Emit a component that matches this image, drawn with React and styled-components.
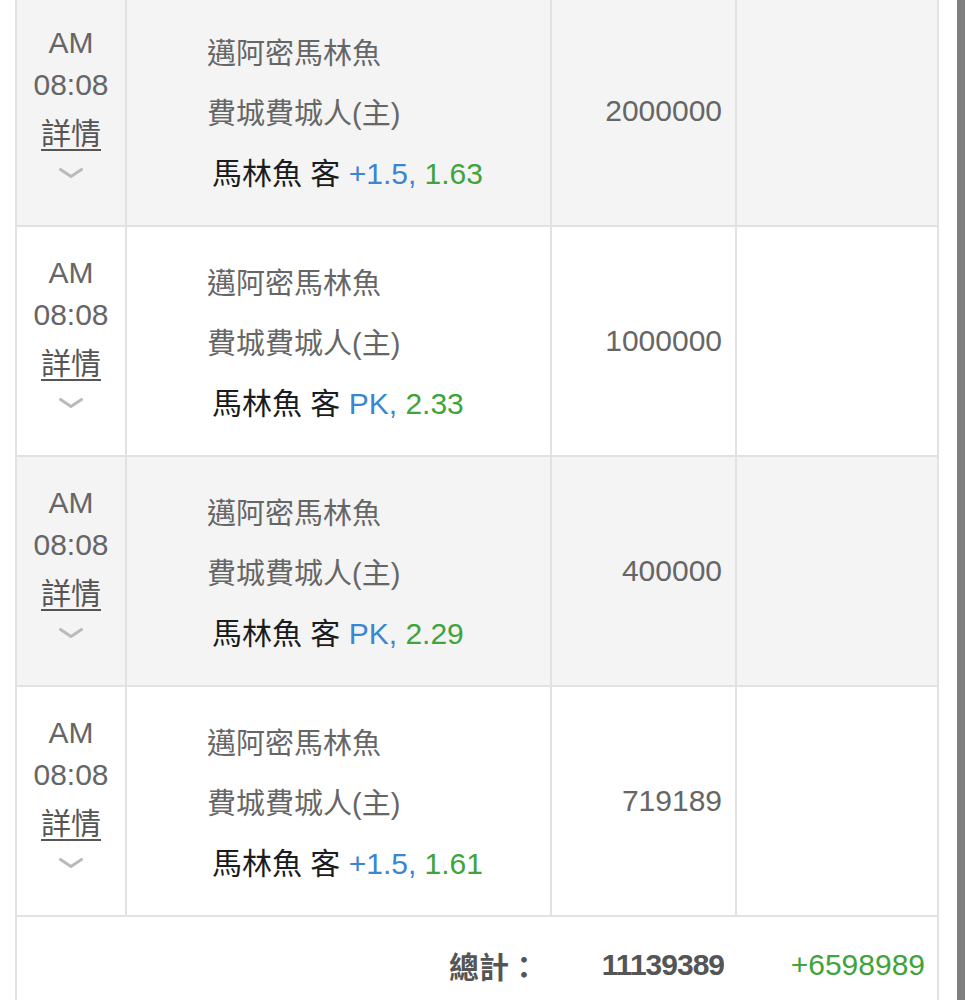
import React from "react";
import styled, { createGlobalStyle } from "styled-components";

const GlobalStyle = createGlobalStyle`
  html, body {
    margin: 0;
    padding: 0;
    background: #fff;
  }
  body {
    font-family: "Liberation Sans", "Noto Sans CJK TC", sans-serif;
    overflow: hidden;
  }
`;

const Page = styled.div`
  display: flex;
  align-items: flex-start;
  width: 974px;
  height: 1000px;
  overflow: hidden;
`;

const Table = styled.div`
  flex: none;
  width: 924px;
  box-sizing: border-box;
  margin: -3px 0 0 15px;
  border-left: 2px solid #e2e2e2;
  border-right: 2px solid #e2e2e2;
`;

const ScrollBar = styled.div`
  flex: none;
  width: 8px;
  height: 1000px;
  margin-left: 18px;
  background: #7f7f7f;
`;

const Row = styled.div`
  display: grid;
  grid-template-columns: 110px 425px 185px 200px;
  height: 230px;
  box-sizing: border-box;
  border-bottom: 2px solid #e2e2e2;
  background: ${(p) => (p.$shaded ? "#f4f4f4" : "#fff")};
`;

const Cell = styled.div`
  box-sizing: border-box;
  border-right: ${(p) => (p.$last ? "none" : "2px solid #e2e2e2")};
  font-size: 30px;
`;

const TimeCell = styled(Cell)`
  display: flex;
  flex-direction: column;
  align-items: center;
  padding-top: 25px;
  color: #666;
  line-height: 42px;
`;

const Detail = styled.a`
  margin-top: 7px;
  color: #555;
  text-decoration: underline;
  text-underline-offset: 5px;
  text-decoration-thickness: 2px;
  line-height: 42px;
`;

const Chevron = styled.svg`
  margin-top: 13px;
  width: 24px;
  height: 10px;
`;

const MatchCell = styled(Cell)`
  display: flex;
  flex-direction: column;
  padding: 27px 0 0 80px;
  line-height: 60px;
  white-space: nowrap;
`;

const Team = styled.div`
  color: #666;
  font-size: 29px;
`;

const Pick = styled.div`
  margin-left: 5px;
  color: #1c1c1c;
`;

const Handicap = styled.span`
  color: #3b86d1;
`;

const Odds = styled.span`
  color: #41a33c;
`;

const AmountCell = styled(Cell)`
  display: flex;
  align-items: center;
  justify-content: flex-end;
  padding-right: 13px;
  color: #666;
`;

const TotalRow = styled.div`
  display: grid;
  grid-template-columns: 110px 425px 185px 200px;
  align-items: center;
  height: 96px;
  font-size: 30px;
`;

const TotalCell = styled.div`
  text-align: right;
  padding-right: ${(p) => p.$pad}px;
  color: ${(p) => p.$color || "#555"};
  font-weight: ${(p) => (p.$bold ? 700 : 400)};
  letter-spacing: ${(p) => (p.$tight ? "-1px" : "0")};
`;

const bets = [
  { handicap: "+1.5", odds: "1.63", amount: "2000000" },
  { handicap: "PK", odds: "2.33", amount: "1000000" },
  { handicap: "PK", odds: "2.29", amount: "400000" },
  { handicap: "+1.5", odds: "1.61", amount: "719189" },
];

const BetRow = ({ bet, shaded }) => (
  <Row $shaded={shaded}>
    <TimeCell>
      <span>AM</span>
      <span>08:08</span>
      <Detail>詳情</Detail>
      <Chevron viewBox="0 0 24 10">
        <path d="M1.5 1.5 L12 8.5 L22.5 1.5" fill="none" stroke="#bababa" strokeWidth="3" strokeLinecap="round" strokeLinejoin="round" />
      </Chevron>
    </TimeCell>
    <MatchCell>
      <Team>邁阿密馬林魚</Team>
      <Team>費城費城人(主)</Team>
      <Pick>
        馬林魚 客 <Handicap>{bet.handicap},</Handicap> <Odds>{bet.odds}</Odds>
      </Pick>
    </MatchCell>
    <AmountCell>{bet.amount}</AmountCell>
    <Cell $last />
  </Row>
);

export default function App() {
  return (
    <>
      <GlobalStyle />
      <Page>
        <Table>
          {bets.map((bet, i) => (
            <BetRow key={i} bet={bet} shaded={i % 2 === 0} />
          ))}
          <TotalRow>
            <div />
            <TotalCell $pad={13} $bold>總計：</TotalCell>
            <TotalCell $pad={13} $bold $tight>11139389</TotalCell>
            <TotalCell $pad={12} $color="#41a33c">+6598989</TotalCell>
          </TotalRow>
        </Table>
        <ScrollBar />
      </Page>
    </>
  );
}
